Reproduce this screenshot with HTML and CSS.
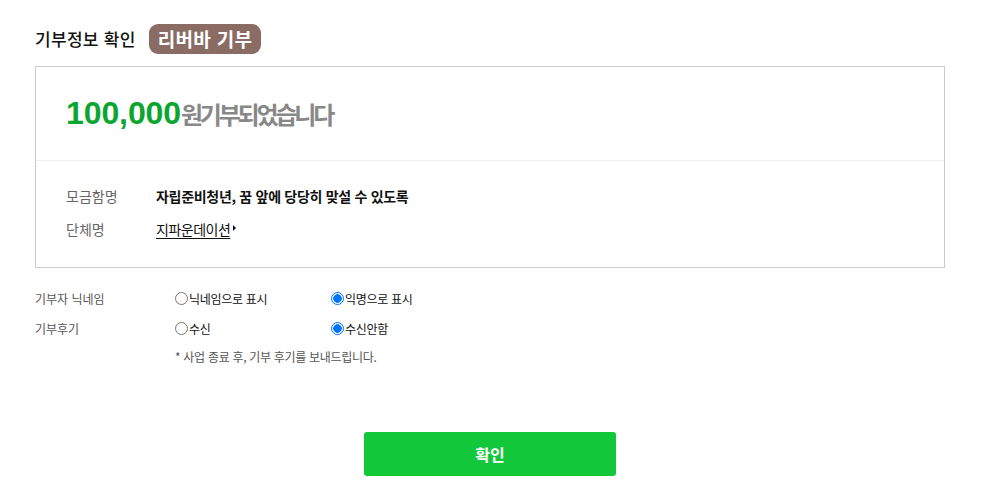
FILE: index.html
```html
<!DOCTYPE html>
<html lang="ko">
<head>
<meta charset="utf-8">
<link rel="stylesheet" href="styles.css">
</head>
<body>
<div class="page">
  <div class="title-row">
    <h2 class="title">기부정보 확인</h2>
    <span class="badge">리버바 기부</span>
  </div>
  <div class="box">
    <div class="box-head">
      <span class="amount">100,000</span><span class="amount-text">원기부되었습니다</span>
    </div>
    <div class="box-body">
      <div class="row">
        <span class="row-label">모금함명</span>
        <span class="row-value">자립준비청년, 꿈 앞에 당당히 맞설 수 있도록</span>
      </div>
      <div class="row">
        <span class="row-label">단체명</span>
        <a class="row-link">지파운데이션</a><span class="tri"></span>
      </div>
    </div>
  </div>
  <div class="opts">
    <div class="opt-row">
      <span class="opt-label">기부자 닉네임</span>
      <label class="opt opt-a"><span class="radio"></span>닉네임으로 표시</label>
      <label class="opt"><span class="radio on"></span>익명으로 표시</label>
    </div>
    <div class="opt-row">
      <span class="opt-label">기부후기</span>
      <label class="opt opt-a"><span class="radio"></span>수신</label>
      <label class="opt"><span class="radio on"></span>수신안함</label>
    </div>
    <p class="note">* 사업 종료 후, 기부 후기를 보내드립니다.</p>
  </div>
  <div class="actions">
    <button class="btn">확인</button>
  </div>
</div>
</body>
</html>
```
FILE: styles.css
```css
* { box-sizing: border-box; }
html, body { margin: 0; padding: 0; background: #fff; }
body { font-family: "Noto Sans CJK KR", "Noto Sans", sans-serif; color: #111; }
.page { padding: 24px 42px 0 35px; width: 987px; }
.title-row { display: flex; align-items: center; height: 30px; }
.title { margin: 0; font-size: 17px; font-weight: 500; line-height: 30px; letter-spacing: 0.3px; }
.badge { margin-left: 13px; background: #8a6c65; color: #fff; font-weight: 700; font-size: 19px; line-height: 30px; height: 30px; padding: 0 9px; border-radius: 9px; letter-spacing: 0.3px; }
.box { margin-top: 12px; border: 1px solid #cccccc; width: 910px; height: 202px; }
.box-head { height: 94px; border-bottom: 1px solid #eeeeee; padding: 26px 0 0 30px; display: flex; align-items: baseline; }
.amount { font-family: "Liberation Sans", Arial, sans-serif; font-weight: 700; font-size: 32px; color: #0aa630; letter-spacing: -0.1px; line-height: 40px; }
.amount-text { font-size: 24px; font-weight: 700; color: #888; letter-spacing: -3.2px; line-height: 40px; }
.box-body { padding: 18px 0 0 30px; }
.row { display: flex; align-items: center; height: 33px; font-size: 14px; }
.row-label { width: 90px; color: #666; }
.row-value { font-weight: 700; color: #111; letter-spacing: -0.3px; }
.row-link { color: #111; text-decoration: underline; text-underline-offset: 3px; letter-spacing: -0.5px; }
.tri { width: 0; height: 0; border-left: 3px solid #111; border-top: 3px solid transparent; border-bottom: 3px solid transparent; margin-left: 3px; margin-top: -2px; }
.opts { margin-top: 15px; font-size: 12px; }
.opt-row { display: flex; align-items: center; height: 30px; }
.opt-label { width: 140px; color: #555; }
.opt { display: flex; align-items: center; color: #111; width: 156px; letter-spacing: -0.3px; }
.radio { width: 13px; height: 13px; border-radius: 50%; border: 1px solid #767676; margin-right: 1px; background: #fff; }
.radio.on { border-color: #0075ff; border-width: 1px; background: radial-gradient(circle, #0075ff 0 4px, #fff 4.5px); }
.note { margin: 6px 0 0 140px; color: #555; font-size: 12px; letter-spacing: -0.3px; line-height: 15px; }
.actions { display: flex; justify-content: center; margin-top: 68px; }
.btn { width: 252px; height: 44px; border: 0; border-radius: 3px; background: #13c73b; color: #fff; font-family: inherit; font-size: 16px; font-weight: 700; }
```
